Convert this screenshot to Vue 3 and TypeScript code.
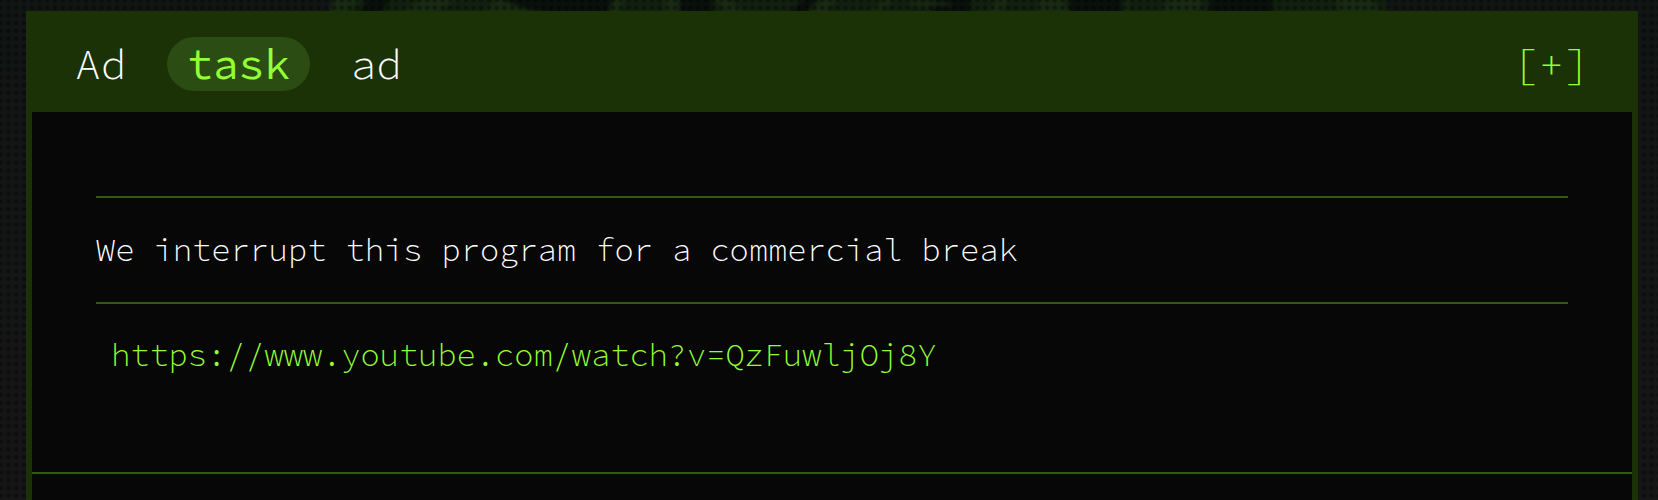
<script setup lang="ts">
interface Task {
  before: string
  tag: string
  after: string
  message: string
  url: string
}

const task: Task = {
  before: 'Ad',
  tag: 'task',
  after: 'ad',
  message: 'We interrupt this program for a commercial break',
  url: 'https://www.youtube.com/watch?v=QzFuwljOj8Y',
}
</script>

<template>
  <main class="screen">
    <svg class="foliage" width="1658" height="14" viewBox="0 0 1658 14" aria-hidden="true">
      <path class="shade" d="M334 -4H1384L1392 18H328z" />
      <path class="dark" d="M368 -4h24l-14 22h-20zM494 -4h118v22h-34q-60-8-84-22zM680 -4h32v22h-32zM806 -4h12l-16 22h-16zM936 -4h34v22h-40zM1070 -4h52v22h-52zM1212 -4h60v22h-64z" />
      <g class="leaf">
        <path d="M334 -4h28l-18 22h-16zM424 -4h36l-30 22h-34zM498 -4q24 14 54 22h-72zM614 -4h12l-8 22h-12zM664 -4h16v22h-16zM714 -4h12l24 22h-22zM824 -4h16l-18 22h-16zM888 -4h10l-24 22h-10zM906 2h40l8 4h-40zM998 -4h12l-10 22h-14zM1040 -4h22l8 22h-34zM1124 -4h4v22h-4zM1170 -4h34l-8 22h-38zM1336 -4h34l14 22h-46z" />
      </g>
    </svg>
    <div class="dots"></div>

    <article class="card">
      <header class="head">
        <h1 class="title">
          <span>{{ task.before }}</span> <span class="tag">{{ task.tag }}</span> <span>{{ task.after }}</span>
        </h1>
        <button class="toggle" type="button">[+]</button>
      </header>
      <section class="body">
        <p class="message">{{ task.message }}</p>
        <a class="link">{{ task.url }}</a>
      </section>
    </article>
  </main>
</template>

<style>
body {
  margin: 0;
  background: #151515;
}
</style>

<style scoped>
.screen {
  position: relative;
  box-sizing: border-box;
  height: 500px;
  padding: 11px 20px 0 26px;
  overflow: hidden;
  background: linear-gradient(#111514, #161616 80%);
  font-family: 'Source Code Pro', 'Liberation Mono', monospace;
  font-weight: 300;
}

.foliage {
  position: absolute;
  top: 0;
  left: 0;
  overflow: visible;
  filter: blur(2px);
}

.shade {
  fill: #11200e;
}

.dark {
  fill: #090f0a;
}

.leaf {
  fill: #182a12;
}

.dots {
  position: absolute;
  inset: 0;
  background: radial-gradient(circle at 50% 50%, rgba(0, 0, 0, 0.36) 1.5px, transparent 2.9px) -3.1px -4px / 7.75px 7.75px;
}

.card {
  position: relative;
  box-sizing: border-box;
  height: 489px;
  border: solid #1a3205;
  border-width: 0 6px;
  background: #070707;
}

.head {
  display: flex;
  align-items: center;
  justify-content: space-between;
  box-sizing: border-box;
  height: 101px;
  padding: 4px 42px 0 43px;
  background: #1a3205;
}

.title {
  margin: 0;
  color: #fff;
  font-size: 43px;
  font-weight: inherit;
  line-height: 54px;
}

.tag {
  margin: 0 14.5px;
  padding: 0 20px;
  border-radius: 27px;
  background: #2b4c13;
  color: #93ff36;
  font-weight: 450;
}

.toggle {
  padding: 0;
  border: 0;
  background: none;
  color: #93ff36;
  font: inherit;
  font-size: 43px;
  line-height: 54px;
}

.body {
  box-sizing: border-box;
  height: 362px;
  padding: 84px 64px 0;
  border-bottom: 2px solid #335a14;
  font-size: 32px;
}

.message {
  box-sizing: border-box;
  height: 108px;
  margin: 0;
  padding-top: 32px;
  border: solid #335a14;
  border-width: 2px 0;
  color: #fff;
  line-height: 40px;
}

.link {
  display: block;
  padding: 31px 15px 0;
  color: #93ff36;
  line-height: 40px;
}
</style>
